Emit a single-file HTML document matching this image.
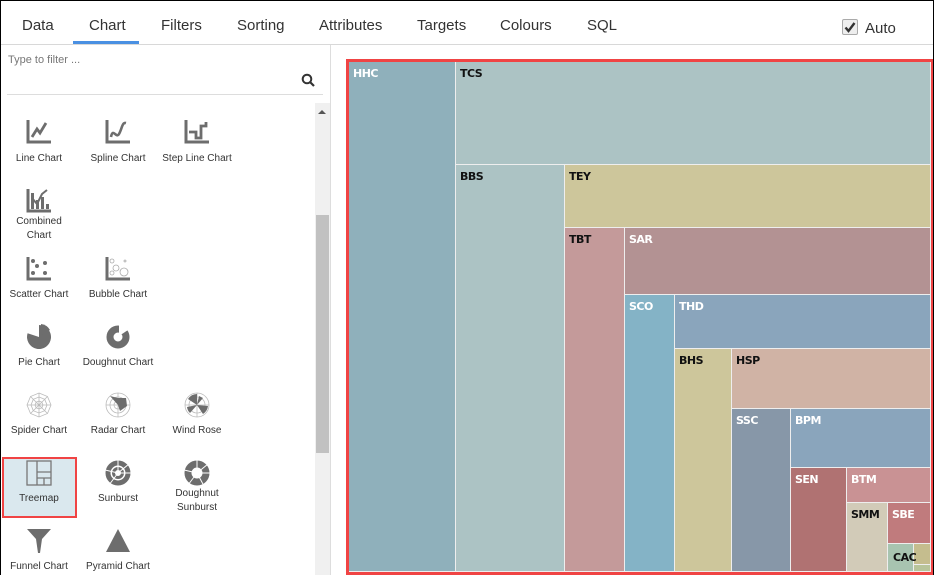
<!DOCTYPE html>
<html><head><meta charset="utf-8"><style>
*{margin:0;padding:0;box-sizing:border-box}
body{width:934px;height:575px;overflow:hidden;background:#fff;font-family:"Liberation Sans",Arial,sans-serif;position:relative}
.frame{position:absolute;left:0;top:0;width:934px;height:575px;border:1px solid #000;border-bottom:none;pointer-events:none;z-index:10}
.tab{position:absolute;top:17px;font-size:15px;color:#333}
.a{position:absolute}
.lbl{position:absolute;font-size:10px;color:#333;text-align:center;width:80px;line-height:14px}
.ic{position:absolute;width:26px;height:26px}
.r{position:absolute;border-right:1px solid #eee;border-bottom:1px solid #eee}
.r span{position:absolute;left:4px;top:5px;font:bold 11px "DejaVu Sans",sans-serif;letter-spacing:-0.5px;white-space:nowrap}
.w{color:#fff}.k{color:#111}
</style></head><body>
<div class="frame"></div>
<div class="tab" style="left:22px">Data</div>
<div class="tab" style="left:89px">Chart</div>
<div class="tab" style="left:161px">Filters</div>
<div class="tab" style="left:237px">Sorting</div>
<div class="tab" style="left:319px">Attributes</div>
<div class="tab" style="left:417px">Targets</div>
<div class="tab" style="left:500px">Colours</div>
<div class="tab" style="left:587px">SQL</div>
<div class="a" style="left:73px;top:41px;width:66px;height:3px;background:#4a90e2"></div>
<div class="a" style="left:1px;top:44px;width:932px;height:1px;background:#d8d8d8"></div>
<div class="a" style="left:842px;top:19px;width:16px;height:16px;border:1px solid #aaa;border-radius:2px;background:#eee"></div>
<svg class="a" style="left:842px;top:19px" width="16" height="16"><path d="M3.5 8.5l3 3.5 6-8" stroke="#333" stroke-width="2.4" fill="none"/></svg>
<div class="a" style="left:865px;top:20px;font-size:15px;color:#333">Auto</div>
<div class="a" style="left:330px;top:45px;width:1px;height:530px;background:#ddd"></div>
<div class="a" style="left:8px;top:54px;font-size:11px;color:#777">Type to filter ...</div>
<svg class="a" style="left:301px;top:73px" width="14" height="14"><circle cx="6" cy="6" r="4.3" stroke="#333" stroke-width="2" fill="none"/><path d="M9 9l4 4" stroke="#333" stroke-width="2.2"/></svg>
<div class="a" style="left:7px;top:94px;width:316px;height:1px;background:#ddd"></div>
<div class="a" style="left:315px;top:103px;width:15px;height:472px;background:#f0f0f0"></div>
<div class="a" style="left:316px;top:215px;width:13px;height:238px;background:#c1c1c1"></div>
<svg class="a" style="left:317px;top:108px" width="10" height="8"><path d="M1 6L5 2L9 6Z" fill="#555"/></svg>
<svg class="ic" style="left:26px;top:119px" viewBox="0 0 26 26"><path d="M2 1V23H25" stroke="#6d6d6d" stroke-width="3" fill="none"/><path d="M6 18L11 10 14 14 20 4" stroke="#6d6d6d" stroke-width="2.8" fill="none"/></svg>
<svg class="ic" style="left:105px;top:119px" viewBox="0 0 26 26"><path d="M2 1V23H25" stroke="#6d6d6d" stroke-width="3" fill="none"/><path d="M6 18C8 8 11 20 14 15S17 3 21 4" stroke="#6d6d6d" stroke-width="2.6" fill="none"/></svg>
<svg class="ic" style="left:184px;top:119px" viewBox="0 0 26 26"><path d="M2 1V23H25" stroke="#6d6d6d" stroke-width="3" fill="none"/><path d="M5 13H12V19H17V7H22V3" stroke="#6d6d6d" stroke-width="2.8" fill="none"/></svg>
<svg class="ic" style="left:26px;top:188px" viewBox="0 0 26 26"><path d="M2 1V23H25" stroke="#6d6d6d" stroke-width="3" fill="none"/><rect x="5" y="5" width="3" height="16" fill="#6d6d6d"/><rect x="10" y="12" width="3" height="9" fill="#6d6d6d"/><rect x="15" y="9" width="3" height="12" fill="#6d6d6d"/><rect x="20" y="16" width="3" height="5" fill="#6d6d6d"/><path d="M6 10L11 16 16 6 21 2" stroke="#6d6d6d" stroke-width="2" fill="none"/></svg>
<svg class="ic" style="left:26px;top:256px" viewBox="0 0 26 26"><path d="M2 1V23H25" stroke="#6d6d6d" stroke-width="3" fill="none"/><circle cx="7" cy="5" r="2" fill="#6d6d6d"/><circle cx="11" cy="10" r="2" fill="#6d6d6d"/><circle cx="19" cy="7" r="2" fill="#6d6d6d"/><circle cx="7" cy="17" r="2" fill="#6d6d6d"/><circle cx="19" cy="17" r="2" fill="#6d6d6d"/></svg>
<svg class="ic" style="left:105px;top:256px" viewBox="0 0 26 26"><path d="M2 1V23H25" stroke="#6d6d6d" stroke-width="3" fill="none"/><g stroke="#aaa" fill="none" stroke-width=".8"><circle cx="7" cy="5" r="2"/><circle cx="11" cy="12" r="3"/><circle cx="19" cy="16" r="4"/><circle cx="20" cy="5" r="1"/><circle cx="7" cy="17" r="2"/></g></svg>
<svg class="ic" style="left:26px;top:324px" viewBox="0 0 26 26"><path d="M13 13V1A12 12 0 1 1 1.6 9.3Z" fill="#6d6d6d"/><path d="M15 11V0A12 12 0 0 1 24 6Z" fill="#6d6d6d"/></svg>
<svg class="ic" style="left:105px;top:324px" viewBox="0 0 26 26"><circle cx="13" cy="13" r="8" stroke="#6d6d6d" stroke-width="7" fill="none"/><path d="M14 12L26 4V0H14Z" fill="#fff"/></svg>
<svg class="ic" style="left:26px;top:392px" viewBox="0 0 26 26"><g stroke="#bbb" fill="none" stroke-width=".8"><polygon points="13,1 21.5,4.5 25,13 21.5,21.5 13,25 4.5,21.5 1,13 4.5,4.5"/><polygon points="13,5 18.7,7.3 21,13 18.7,18.7 13,21 7.3,18.7 5,13 7.3,7.3"/><polygon points="13,9 15.8,10.2 17,13 15.8,15.8 13,17 10.2,15.8 9,13 10.2,10.2"/><path d="M13 1V25M1 13H25M4.5 4.5L21.5 21.5M21.5 4.5L4.5 21.5"/></g></svg>
<svg class="ic" style="left:105px;top:392px" viewBox="0 0 26 26"><g stroke="#bbb" fill="none" stroke-width=".8"><circle cx="13" cy="13" r="12"/><circle cx="13" cy="13" r="8"/><circle cx="13" cy="13" r="4"/><path d="M13 1V25M1 13H25"/></g><path d="M5 4L13 13 15 19 22 14 21 6 13 6Z" fill="#6d6d6d"/></svg>
<svg class="ic" style="left:184px;top:392px" viewBox="0 0 26 26"><g stroke="#bbb" fill="none" stroke-width=".8"><circle cx="13" cy="13" r="12"/><circle cx="13" cy="13" r="8"/><path d="M13 1V25M1 13H25"/></g><path d="M13 13L13 2A11 11 0 0 0 4 7Z M13 13L24 14A11 11 0 0 1 19 22Z M13 13L6 21A10 10 0 0 1 3 15Z" fill="#6d6d6d"/><path d="M13 13L15 4 19 6Z" fill="#6d6d6d"/></svg>
<div class="a" style="left:2px;top:457px;width:75px;height:61px;background:#dae8ee;border:2px solid #f04444"></div>
<svg class="ic" style="left:26px;top:460px" viewBox="0 0 26 26"><g stroke="#777" fill="none" stroke-width="1.3"><rect x="1" y="1" width="24" height="24"/><path d="M11 1V25M11 12H25M18 18V25M11 18H25"/></g></svg>
<svg class="ic" style="left:105px;top:460px" viewBox="0 0 26 26"><circle cx="13" cy="13" r="10" stroke="#6d6d6d" stroke-width="5" fill="none"/><circle cx="13" cy="13" r="4.5" stroke="#6d6d6d" stroke-width="3" fill="none"/><path d="M13 13L13 0M13 13L26 13M13 13L4 25M13 13L24 4M13 13L0 10" stroke="#fff" stroke-width="1"/></svg>
<svg class="ic" style="left:184px;top:460px" viewBox="0 0 26 26"><circle cx="13" cy="13" r="9" stroke="#6d6d6d" stroke-width="7" fill="none"/><path d="M13 13L13 0M13 13L26 13M13 13L4 25M13 13L24 4M13 13L0 10M13 13L20 26" stroke="#fff" stroke-width="1"/></svg>
<svg class="ic" style="left:26px;top:528px" viewBox="0 0 26 26"><path d="M1 1H25L16 11 14 25H12L10 11Z" fill="#6d6d6d"/></svg>
<svg class="ic" style="left:105px;top:528px" viewBox="0 0 26 26"><path d="M13 1L25 24H1Z" fill="#6d6d6d"/></svg>
<div class="lbl" style="left:-1px;top:152px">Line Chart</div>
<div class="lbl" style="left:78px;top:152px">Spline Chart</div>
<div class="lbl" style="left:157px;top:152px">Step Line Chart</div>
<div class="lbl" style="left:-1px;top:215px">Combined<br>Chart</div>
<div class="lbl" style="left:-1px;top:288px">Scatter Chart</div>
<div class="lbl" style="left:78px;top:288px">Bubble Chart</div>
<div class="lbl" style="left:-1px;top:356px">Pie Chart</div>
<div class="lbl" style="left:78px;top:356px">Doughnut Chart</div>
<div class="lbl" style="left:-1px;top:424px">Spider Chart</div>
<div class="lbl" style="left:78px;top:424px">Radar Chart</div>
<div class="lbl" style="left:157px;top:424px">Wind Rose</div>
<div class="lbl" style="left:-1px;top:492px">Treemap</div>
<div class="lbl" style="left:78px;top:492px">Sunburst</div>
<div class="lbl" style="left:157px;top:487px">Doughnut<br>Sunburst</div>
<div class="lbl" style="left:-1px;top:560px">Funnel Chart</div>
<div class="lbl" style="left:78px;top:560px">Pyramid Chart</div>
<div class="a" style="left:346px;top:59px;width:587px;height:516px;border:3px solid #f04444;background:#eee"></div>
<div class="r" style="left:349px;top:62px;width:107px;height:510px;background:#8fb0bb"><span class="w">HHC</span></div>
<div class="r" style="left:456px;top:62px;width:475px;height:103px;background:#acc3c4"><span class="k">TCS</span></div>
<div class="r" style="left:456px;top:165px;width:109px;height:407px;background:#acc3c4"><span class="k">BBS</span></div>
<div class="r" style="left:565px;top:165px;width:366px;height:63px;background:#cdc69b"><span class="k">TEY</span></div>
<div class="r" style="left:565px;top:228px;width:60px;height:344px;background:#c49a9a"><span class="k">TBT</span></div>
<div class="r" style="left:625px;top:228px;width:306px;height:67px;background:#b39293"><span class="w">SAR</span></div>
<div class="r" style="left:625px;top:295px;width:50px;height:277px;background:#84b3c6"><span class="w">SCO</span></div>
<div class="r" style="left:675px;top:295px;width:256px;height:54px;background:#8aa5bc"><span class="w">THD</span></div>
<div class="r" style="left:675px;top:349px;width:57px;height:223px;background:#cdc69b"><span class="k">BHS</span></div>
<div class="r" style="left:732px;top:349px;width:199px;height:60px;background:#d0b3a5"><span class="k">HSP</span></div>
<div class="r" style="left:732px;top:409px;width:59px;height:163px;background:#8797a8"><span class="w">SSC</span></div>
<div class="r" style="left:791px;top:409px;width:140px;height:59px;background:#8aa5bc"><span class="w">BPM</span></div>
<div class="r" style="left:791px;top:468px;width:56px;height:104px;background:#b07272"><span class="w">SEN</span></div>
<div class="r" style="left:847px;top:468px;width:84px;height:35px;background:#c99294"><span class="w">BTM</span></div>
<div class="r" style="left:847px;top:503px;width:41px;height:69px;background:#d2cbb8"><span class="k">SMM</span></div>
<div class="r" style="left:888px;top:503px;width:43px;height:41px;background:#c07b7d"><span class="w">SBE</span></div>
<div class="r" style="left:914px;top:544px;width:17px;height:21px;background:#c5bd8e"></div>
<div class="r" style="left:914px;top:565px;width:17px;height:7px;background:#b8c49a"></div>
<div class="r" style="left:888px;top:544px;width:26px;height:28px;background:#a8c4b0;z-index:2"><span class="k" style="left:5px;top:7px">CAC</span></div>
</body></html>
